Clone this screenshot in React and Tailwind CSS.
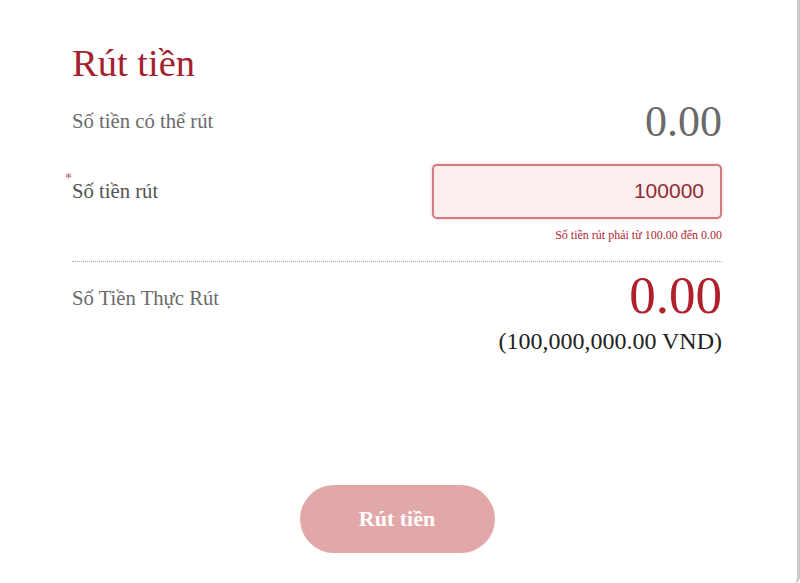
import React from 'react';

const serif = { fontFamily: '"Liberation Serif", "Times New Roman", serif' };

export default function App() {
  return (
    <div className="w-[800px] h-[583px] bg-white overflow-hidden" style={serif}>
      <div className="h-full w-full border-r-[3px] border-[#cbcbcb] rounded-br-md flex flex-col pl-[72px] pr-[75px] pt-[44px]">
        {/* Title */}
        <h1 className="text-[38.5px] leading-none text-[#a3222d]">Rút tiền</h1>

        {/* Available balance */}
        <div className="mt-[17px] flex items-center justify-between">
          <span className="text-[20.7px] leading-none text-[#6b6b6b]">Số tiền có thể rút</span>
          <span className="text-[44px] leading-none text-[#6a6a6a]">0.00</span>
        </div>

        {/* Amount input */}
        <div className="mt-[20px] flex items-center justify-between">
          <div className="flex items-start -ml-[7px]">
            <span className="w-[7px] text-[14px] leading-none text-[#c0525e] -mt-[9px]">*</span>
            <label className="text-[20.7px] leading-none text-[#555555]">Số tiền rút</label>
          </div>
          <input
            readOnly
            value="100000"
            className="w-[290px] h-[55px] rounded-[5px] border-2 border-[#d27d83] bg-[#fdeeee] pr-[16px] text-right text-[21px] text-[#8e2c36] outline-none shadow-[0_0_3px_rgba(210,110,120,0.45)]"
            style={{ fontFamily: '"Liberation Sans", Arial, sans-serif' }}
          />
        </div>
        <p className="mt-[10px] self-end text-[12px] leading-none text-[#ad2731]">
          Số tiền rút phải từ 100.00 đến 0.00
        </p>

        <div className="mt-[20px] border-t border-dotted border-[#a9a9a9]" />

        {/* Actual withdrawal */}
        <div className="mt-[7px] flex items-start justify-between">
          <span className="mt-[19px] text-[20.7px] leading-none text-[#6b6b6b]">Số Tiền Thực Rút</span>
          <div className="flex flex-col items-end">
            <span className="text-[53px] leading-none text-[#b0202b]">0.00</span>
            <span className="mt-[7px] text-[24px] leading-none text-[#222222]">(100,000,000.00 VND)</span>
          </div>
        </div>

        {/* Submit */}
        <div className="mt-[132px] flex justify-center">
          <button className="w-[195px] h-[68px] rounded-full bg-[#e2a7a9] text-white text-[22px] font-bold">
            Rút tiền
          </button>
        </div>
      </div>
    </div>
  );
}
